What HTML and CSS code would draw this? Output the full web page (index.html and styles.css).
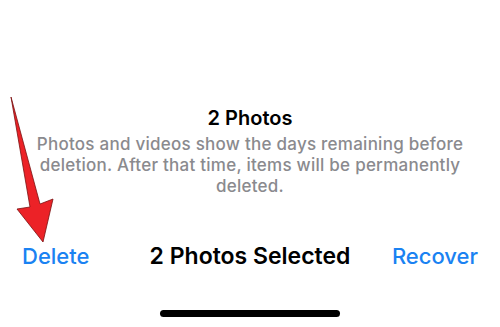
FILE: index.html
```html
<!DOCTYPE html>
<html lang="en">
<head>
  <meta charset="UTF-8">
  <title>Recently Deleted</title>
  <link rel="stylesheet" href="styles.css">
</head>
<body>

<div class="screen">
  <div class="info">
    <h2 class="info-title">2 Photos</h2>
    <p class="info-text">Photos and videos show the days remaining before deletion. After that time, items will be permanently deleted.</p>
  </div>

  <div class="toolbar">
    <span class="action">Delete</span>
    <span class="count">2 Photos Selected</span>
    <span class="action action-right">Recover</span>
  </div>

  <div class="home-bar"></div>

  <svg class="arrow" width="70" height="250" viewBox="0 0 70 250">
    <polygon points="11,97 40,204 53,199 43,242 17,209 30,207" fill="#ec2227" stroke="#7a1010" stroke-width="0.8" stroke-linejoin="round"/>
  </svg>
</div>

</body>
</html>
```

FILE: styles.css
```css
body {
  margin: 0;
  background: #fff;
  font-family: Inter, 'Noto Sans', sans-serif;
}

.screen {
  position: relative;
  width: 500px;
  height: 327px;
  display: flex;
  flex-direction: column;
  align-items: center;
  overflow: hidden;
}

.info {
  margin-top: 107px;
  width: 460px;
  text-align: center;
}

.info-title {
  margin: 0;
  font-size: 20px;
  font-weight: 600;
  line-height: 22px;
  color: #000;
}

.info-text {
  margin: 5px 0 0;
  font-size: 17px;
  font-weight: 500;
  line-height: 21px;
  letter-spacing: 0.25px;
  color: #8a8a8e;
}

.toolbar {
  margin-top: 46px;
  width: 100%;
  box-sizing: border-box;
  padding: 0 22px;
  display: grid;
  grid-template-columns: 1fr auto 1fr;
  align-items: baseline;
  font-size: 22px;
  line-height: 26px;
}

.action {
  color: #1a82f2;
  font-weight: 500;
}

.action-right {
  justify-self: end;
}

.count {
  color: #000;
  font-size: 23px;
  font-weight: 600;
}

.home-bar {
  margin-top: 41px;
  width: 180px;
  height: 7px;
  border-radius: 4px;
  background: #000;
}

.arrow {
  position: absolute;
  left: 0;
  top: 0;
}
```
